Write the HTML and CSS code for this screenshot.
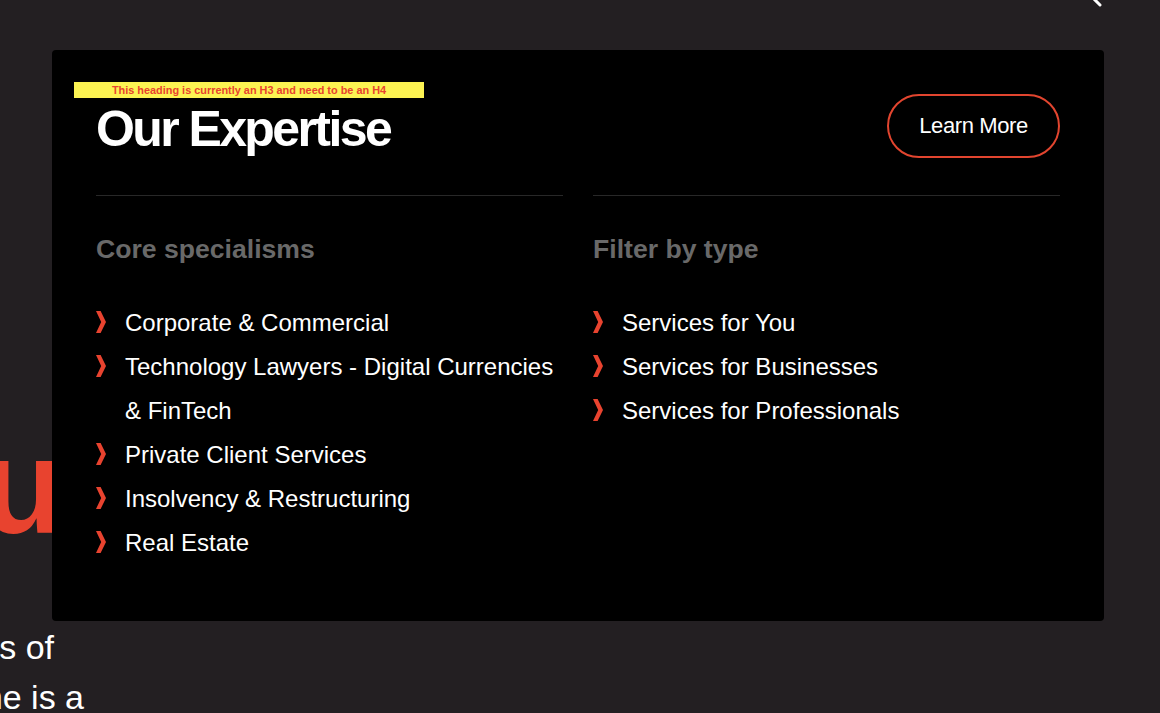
FILE: index.html
```html
<!DOCTYPE html>
<html lang="en">
<head>
<meta charset="utf-8">
<title>Our Expertise</title>
<link rel="stylesheet" href="styles.css">
</head>
<body>
<header class="topbar">
  <svg class="search-icon" width="24" height="24" viewBox="0 0 24 24" aria-hidden="true">
    <circle cx="9" cy="9" r="6.5" fill="none" stroke="#fff" stroke-width="2.6"/>
    <line x1="14.5" y1="14.5" x2="22" y2="22" stroke="#fff" stroke-width="3" stroke-linecap="round"/>
  </svg>
</header>
<main class="page">
  <div class="hero-line"><span class="hero-word">Here for you</span></div>
  <div class="copy">
    <div class="copy-line w1"><span>We help with all areas of</span></div>
    <div class="copy-line w2"><span>law and our reach time is a</span></div>
  </div>
</main>

<section class="mega">
  <div class="dev-note">This heading is currently an H3 and need to be an H4</div>
  <div class="mega-head">
    <h3 class="mega-title">Our Expertise</h3>
    <a class="btn-outline" href="#">Learn More</a>
  </div>
  <div class="mega-cols">
    <div class="mega-col">
      <h4 class="col-title">Core specialisms</h4>
      <ul class="links">
        <li><svg class="chev" viewBox="0 0 10 22" aria-hidden="true"><polygon points="0,0 4.6,0 10,11 4.6,22 0,22 5.2,11"/></svg><span>Corporate &amp; Commercial</span></li>
        <li><svg class="chev" viewBox="0 0 10 22" aria-hidden="true"><polygon points="0,0 4.6,0 10,11 4.6,22 0,22 5.2,11"/></svg><span>Technology Lawyers - Digital Currencies &amp; FinTech</span></li>
        <li><svg class="chev" viewBox="0 0 10 22" aria-hidden="true"><polygon points="0,0 4.6,0 10,11 4.6,22 0,22 5.2,11"/></svg><span>Private Client Services</span></li>
        <li><svg class="chev" viewBox="0 0 10 22" aria-hidden="true"><polygon points="0,0 4.6,0 10,11 4.6,22 0,22 5.2,11"/></svg><span>Insolvency &amp; Restructuring</span></li>
        <li><svg class="chev" viewBox="0 0 10 22" aria-hidden="true"><polygon points="0,0 4.6,0 10,11 4.6,22 0,22 5.2,11"/></svg><span>Real Estate</span></li>
      </ul>
    </div>
    <div class="mega-col">
      <h4 class="col-title">Filter by type</h4>
      <ul class="links">
        <li><svg class="chev" viewBox="0 0 10 22" aria-hidden="true"><polygon points="0,0 4.6,0 10,11 4.6,22 0,22 5.2,11"/></svg><span>Services for You</span></li>
        <li><svg class="chev" viewBox="0 0 10 22" aria-hidden="true"><polygon points="0,0 4.6,0 10,11 4.6,22 0,22 5.2,11"/></svg><span>Services for Businesses</span></li>
        <li><svg class="chev" viewBox="0 0 10 22" aria-hidden="true"><polygon points="0,0 4.6,0 10,11 4.6,22 0,22 5.2,11"/></svg><span>Services for Professionals</span></li>
      </ul>
    </div>
  </div>
</section>
</body>
</html>
```

FILE: styles.css
```css
* { box-sizing: border-box; }

html, body {
  margin: 0;
  height: 100%;
}

body {
  background: #231f22;
  color: #fff;
  font-family: "Liberation Sans", Arial, Helvetica, sans-serif;
  overflow: hidden;
  position: relative;
}

.topbar {
  height: 0;
  display: flex;
  justify-content: flex-end;
  padding-right: 58px;
}

.search-icon {
  margin-top: -17px;
  flex: none;
}

.page {
  padding-top: 419px;
}

.hero-line {
  display: flex;
  justify-content: flex-end;
  width: 61px;
  white-space: nowrap;
  font-size: 135px;
  font-weight: 700;
  line-height: 135px;
  color: #e8432f;
  letter-spacing: -3px;
}

.copy {
  margin-top: 68px;
  font-size: 34px;
  line-height: 50px;
  color: #fff;
}

.copy-line {
  display: flex;
  justify-content: flex-end;
  white-space: nowrap;
}

.copy-line.w1 { width: 54px; }
.copy-line.w2 { width: 84px; }

/* Mega menu overlay */
.mega {
  position: absolute;
  left: 52px;
  top: 50px;
  width: 1052px;
  height: 571px;
  background: #000;
  border-radius: 4px;
  padding: 44px 44px 0;
}

.dev-note {
  position: absolute;
  left: 22px;
  top: 32px;
  width: 350px;
  height: 16px;
  background: #fcf352;
  color: #e8432f;
  font-size: 10.9px;
  font-weight: 700;
  line-height: 17px;
  text-align: center;
}

.mega-head {
  display: flex;
  justify-content: space-between;
  align-items: flex-end;
  height: 64px;
}

.mega-title {
  margin: 0;
  font-size: 50px;
  line-height: 58px;
  font-weight: 700;
  letter-spacing: -2.6px;
  color: #fff;
}

.btn-outline {
  display: flex;
  align-items: center;
  justify-content: center;
  width: 173px;
  height: 64px;
  border: 2px solid #e2452f;
  border-radius: 32px;
  color: #fff;
  text-decoration: none;
  font-size: 22px;
  letter-spacing: -0.4px;
}

.mega-cols {
  display: grid;
  grid-template-columns: 1fr 1fr;
  column-gap: 30px;
  margin-top: 37px;
}

.mega-col {
  border-top: 1px solid #282828;
  padding-top: 37px;
}

.col-title {
  margin: 0;
  font-size: 26.6px;
  line-height: 32px;
  font-weight: 700;
  color: #696969;
}

.links {
  list-style: none;
  margin: 36px 0 0;
  padding: 0;
}

.links li {
  display: flex;
  align-items: flex-start;
  font-size: 24px;
  line-height: 44px;
  color: #fff;
}

.chev {
  flex: none;
  width: 10px;
  height: 22px;
  margin-top: 10px;
  margin-right: 19px;
  fill: #e8432f;
}
```
